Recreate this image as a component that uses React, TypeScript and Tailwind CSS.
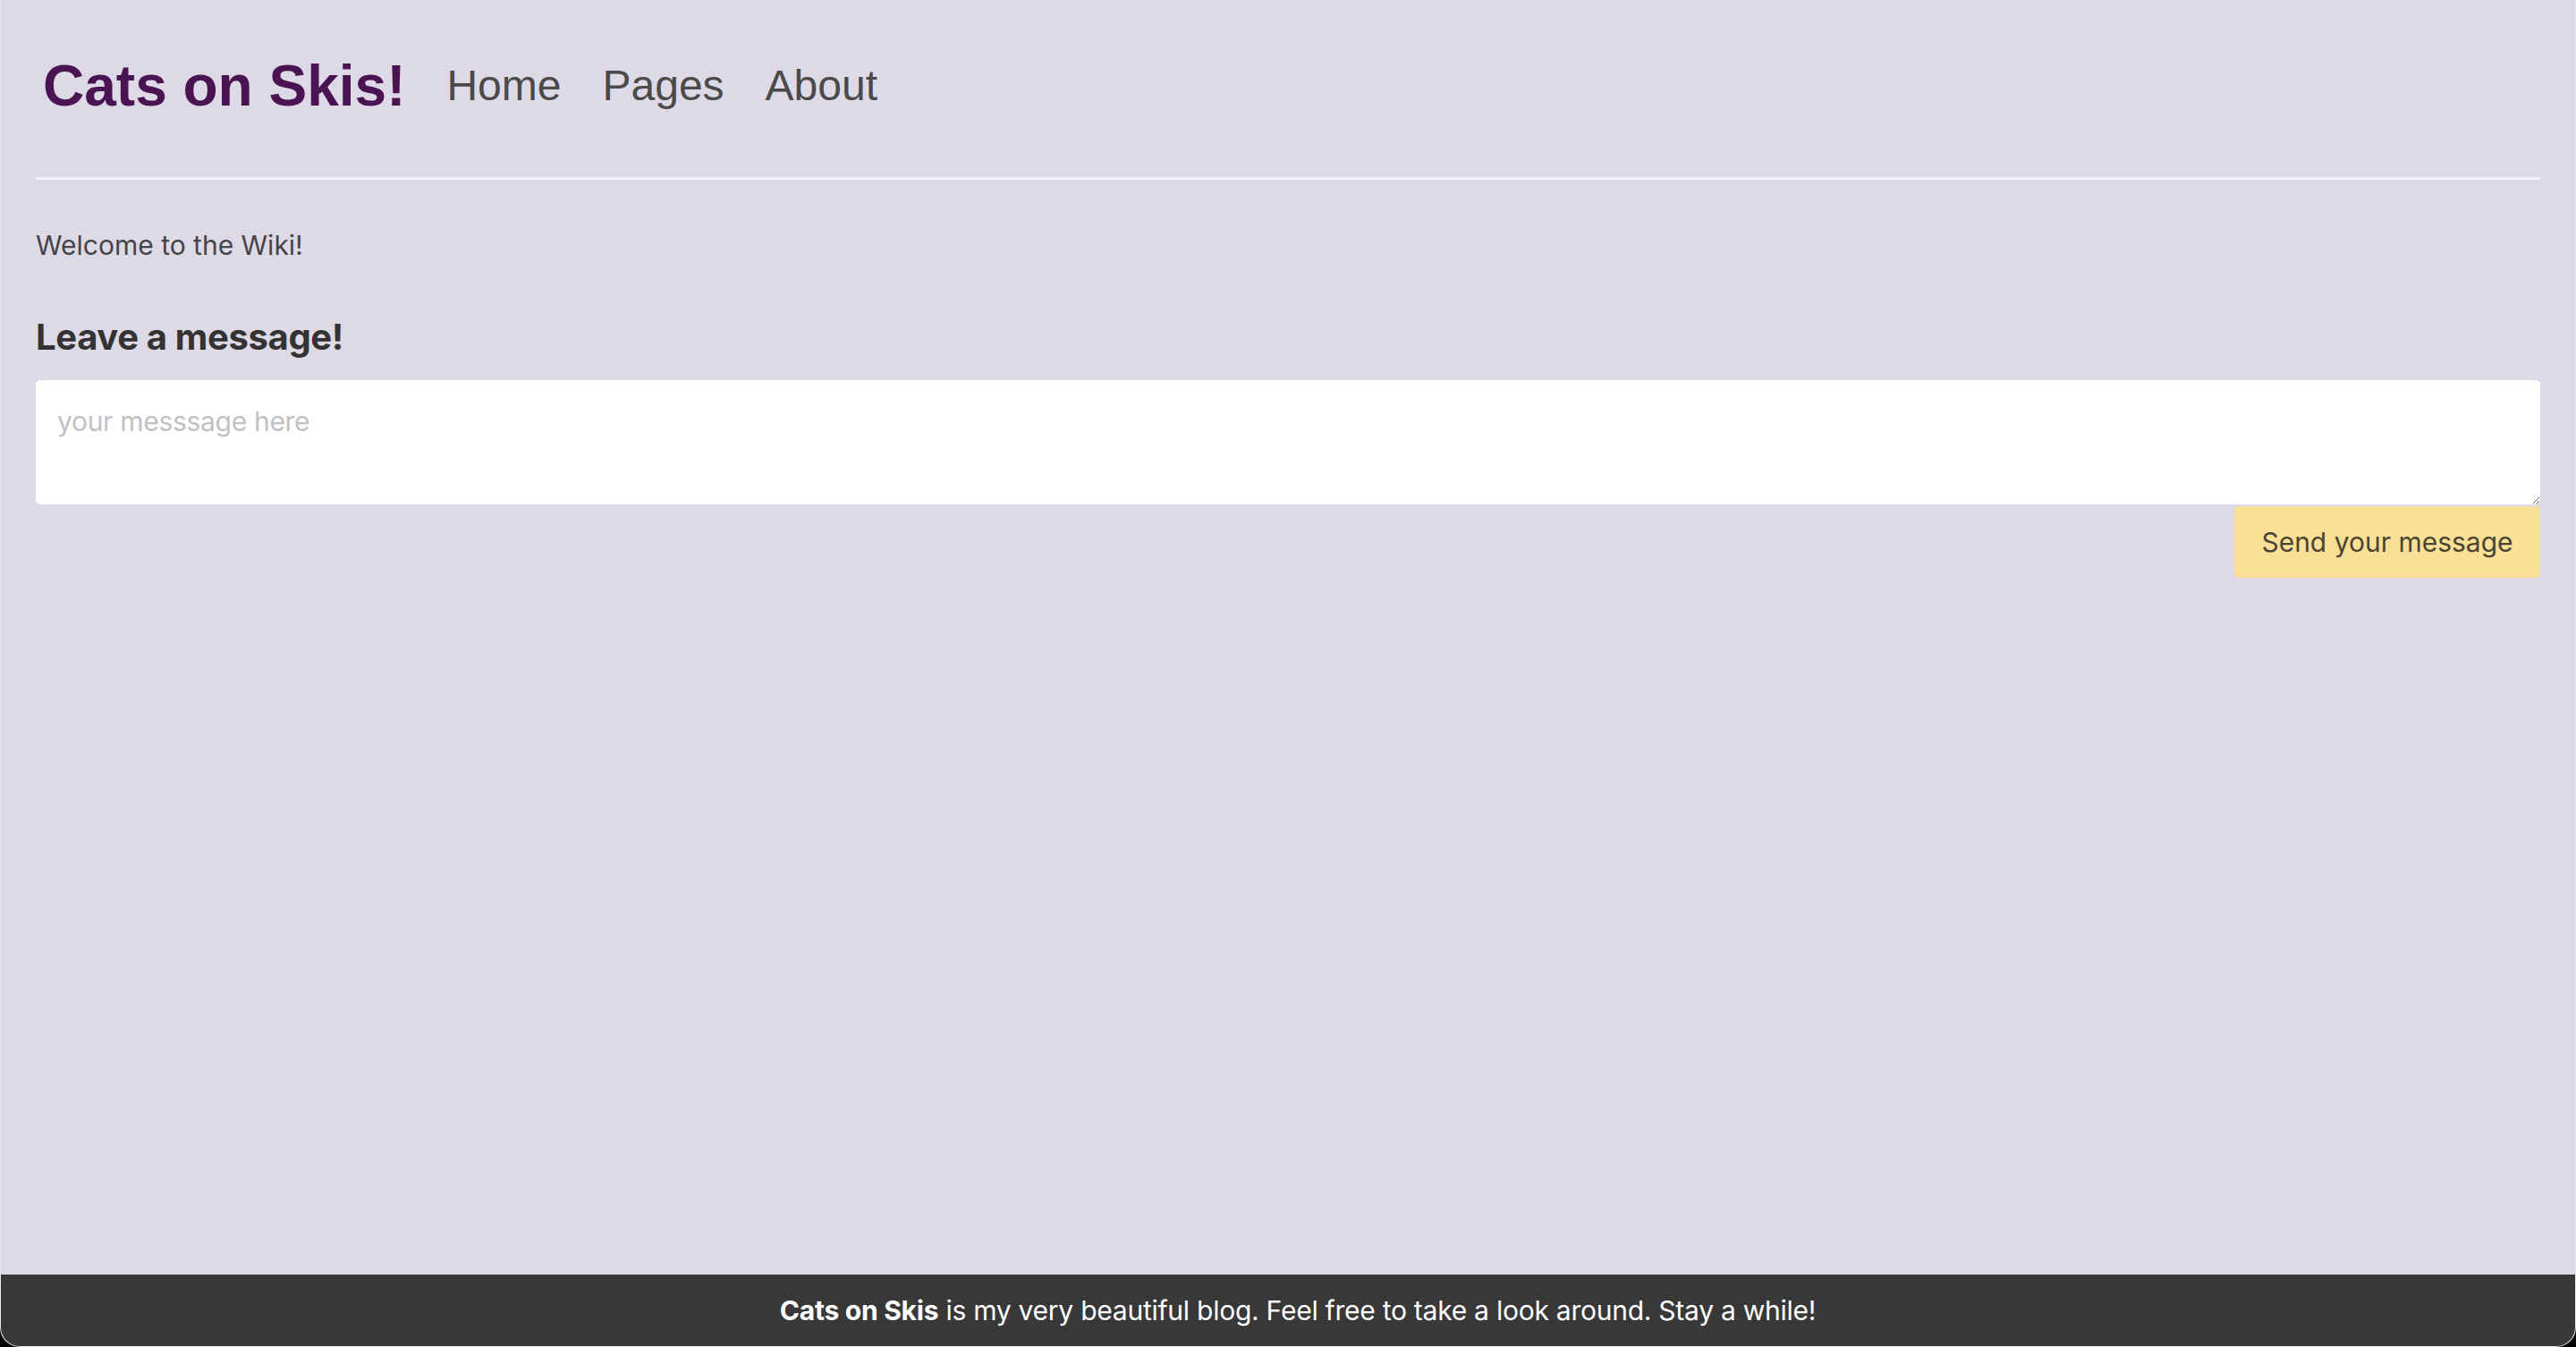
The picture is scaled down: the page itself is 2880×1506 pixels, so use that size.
import React, { useState } from 'react'

const App: React.FC = () => {
  const [message, setMessage] = useState('')

  return (
    <div className="bg-black">
      <div className="flex h-screen flex-col overflow-hidden rounded-b-[22px] border border-t-0 border-white/30 bg-[#ded9e6] font-['Inter','Noto_Sans',sans-serif]">
        <div className="flex-1 px-[39px]">
          <header className="flex items-center gap-[46px] pt-[64px] pb-[70px] pl-[8px] font-['Liberation_Sans',Arial,sans-serif]">
            <a href="#" className="text-[64px] font-bold leading-none text-[#4a1452]">Cats on Skis!</a>
            <nav className="flex items-center gap-[46px] text-[48px] leading-none text-[#4a4a4a]">
              <a href="#">Home</a>
              <a href="#">Pages</a>
              <a href="#">About</a>
            </nav>
          </header>
          <hr className="h-[3px] border-0 bg-[#f3f1f5]" />

          <p className="mt-[55px] text-[30px] leading-[36px] text-[#454447]">Welcome to the Wiki!</p>

          <h2 className="mt-[61px] text-[40px] font-bold leading-[48px] tracking-[-0.35px] text-[#333333]">Leave a message!</h2>

          <form className="mt-[24px] flex flex-col items-end" onSubmit={(e) => e.preventDefault()}>
            <textarea
              value={message}
              onChange={(e) => setMessage(e.target.value)}
              placeholder="your messsage here"
              className="block h-[139px] w-full rounded-[5px] bg-white pl-[24px] pr-[22px] pt-[28px] text-[30px] leading-[36px] tracking-[-0.3px] text-[#333] placeholder:text-[#c2c0c4] outline-none"
            />
            <button
              type="submit"
              className="mt-[2px] flex h-[80px] w-[342px] items-center justify-center rounded-[5px] bg-[#f9e096] text-[30px] text-[#4a4433]"
            >
              Send your message
            </button>
          </form>
        </div>

        <footer className="flex h-[80px] shrink-0 items-center justify-center bg-[#383838] pl-[22px] text-[30px] tracking-[-0.25px] text-white">
          <p><strong className="font-bold">Cats on Skis</strong> is my very beautiful blog. Feel free to take a look around. Stay a while!</p>
        </footer>
      </div>
    </div>
  )
}

export default App
